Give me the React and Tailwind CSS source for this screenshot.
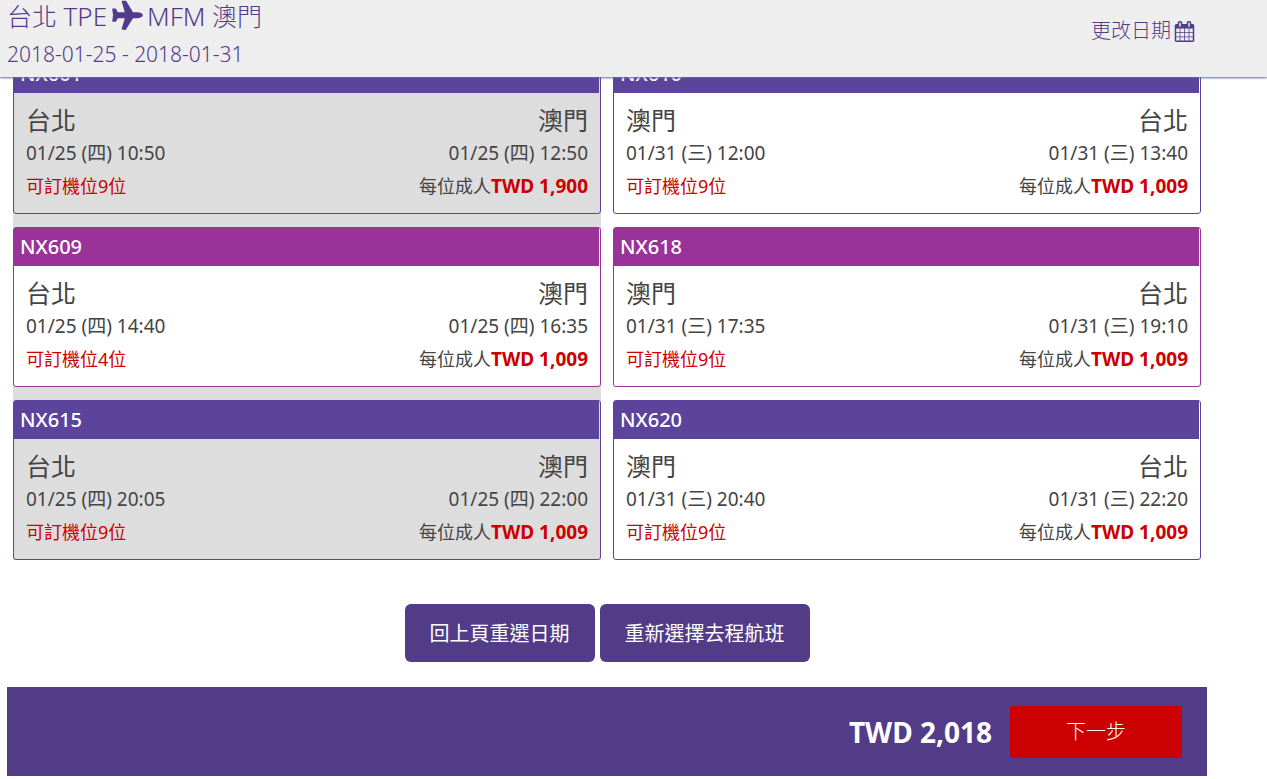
/**
 * FlightSelect Page - Pick outbound and return flights
 */
import { useState } from 'react'

const OUTBOUND = [
  { no: 'NX601', from: '台北', to: '澳門', depart: '01/25 (四) 10:50', arrive: '01/25 (四) 12:50', seats: 9, price: '1,900' },
  { no: 'NX609', from: '台北', to: '澳門', depart: '01/25 (四) 14:40', arrive: '01/25 (四) 16:35', seats: 4, price: '1,009' },
  { no: 'NX615', from: '台北', to: '澳門', depart: '01/25 (四) 20:05', arrive: '01/25 (四) 22:00', seats: 9, price: '1,009' },
]

const INBOUND = [
  { no: 'NX610', from: '澳門', to: '台北', depart: '01/31 (三) 12:00', arrive: '01/31 (三) 13:40', seats: 9, price: '1,009' },
  { no: 'NX618', from: '澳門', to: '台北', depart: '01/31 (三) 17:35', arrive: '01/31 (三) 19:10', seats: 9, price: '1,009' },
  { no: 'NX620', from: '澳門', to: '台北', depart: '01/31 (三) 20:40', arrive: '01/31 (三) 22:20', seats: 9, price: '1,009' },
]

function PlaneIcon({ className }) {
  return (
    <svg viewBox="0 0 1792 1792" fill="currentColor" aria-hidden="true" className={className}>
      <path d="M1568 160q44 52 12 148t-108 172l-161 161 160 696q5 19-12 33l-128 96q-7 6-19 6-4 0-7-1-15-3-21-16l-279-508-259 259 53 194q5 17-8 31l-96 96q-9 9-23 9h-2q-15-2-24-13l-189-252-252-189q-11-7-13-23-1-13 9-25l96-97q9-9 23-9 6 0 8 1l194 53 259-259-508-279q-14-8-17-24-2-16 9-27l128-128q14-13 30-8l665 159 160-160q76-76 172-108t148 12z" />
    </svg>
  )
}

function CalendarIcon({ className }) {
  return (
    <svg viewBox="0 0 1792 1792" fill="currentColor" aria-hidden="true" className={className}>
      <path d="M192 1664h288v-288h-288v288zm352 0h320v-288h-320v288zm-352-352h288v-320h-288v320zm352 0h320v-320h-320v320zm-352-384h288v-288h-288v288zm736 736h320v-288h-320v288zm-384-736h320v-288h-320v288zm768 736h288v-288h-288v288zm-384-352h320v-320h-320v320zm-352-864v-288q0-13-9.5-22.5t-22.5-9.5h-64q-13 0-22.5 9.5t-9.5 22.5v288q0 13 9.5 22.5t22.5 9.5h64q13 0 22.5-9.5t9.5-22.5zm736 864h288v-320h-288v320zm-384-384h320v-288h-320v288zm384 0h288v-288h-288v288zm32-480v-288q0-13-9.5-22.5t-22.5-9.5h-64q-13 0-22.5 9.5t-9.5 22.5v288q0 13 9.5 22.5t22.5 9.5h64q13 0 22.5-9.5t9.5-22.5zm384-64v1280q0 52-38 90t-90 38h-1408q-52 0-90-38t-38-90v-1280q0-52 38-90t90-38h128v-96q0-66 47-113t113-47h64q66 0 113 47t47 113v96h384v-96q0-66 47-113t113-47h64q66 0 113 47t47 113v96h128q52 0 90 38t38 90z" />
    </svg>
  )
}

function FlightCard({ flight, highlighted, dimmed, onSelect }) {
  return (
    <button
      type="button"
      onClick={onSelect}
      className={`block w-full rounded-[3px] border text-left text-[#444] ${highlighted ? 'border-[#993399]' : 'border-[#5c439c]'} ${dimmed ? 'bg-[#ddd]' : 'bg-white'}`}
    >
      <div className={`mr-px px-1.5 text-xl leading-[38px] font-medium text-white ${highlighted ? 'bg-[#993399]' : 'bg-[#5c439c]'}`}>
        {flight.no}
      </div>
      <div className="px-3 py-2.5">
        <div className="flex justify-between text-[25px] leading-[34px]">
          <span>{flight.from}</span>
          <span>{flight.to}</span>
        </div>
        <div className="flex justify-between text-[19px] leading-[33px]">
          <span>{flight.depart}</span>
          <span>{flight.arrive}</span>
        </div>
        <div className="flex justify-between text-lg leading-[33px]">
          <span className="text-[#c00]">可訂機位{flight.seats}位</span>
          <span className="flex">
            每位成人<strong className="text-[19px] font-bold text-[#c00]">TWD {flight.price}</strong>
          </span>
        </div>
      </div>
    </button>
  )
}

export default function App() {
  const [outbound, setOutbound] = useState('NX609')
  const [inbound, setInbound] = useState('NX618')

  return (
    <div className="bg-white font-['Noto_Sans','Noto_Sans_CJK_TC',sans-serif]">
      <header className="relative z-10 flex h-[77px] items-start justify-between bg-[#eee] pr-[72px] pl-[7px] font-light text-[#523b87] shadow-[0_1px_2px_#5c6a94]">
        <div>
          <h1 className="flex h-8 items-center text-[25px]">
            <span>
              台北 <span className="text-[26px]">TPE</span>
            </span>
            <PlaneIcon className="mr-1.5 size-[34px] rotate-45" />
            <span>
              <span className="text-[26px]">MFM</span> 澳門
            </span>
          </h1>
          <p className="text-[21px] leading-[44px]">2018-01-25 - 2018-01-31</p>
        </div>
        <a href="#dates" className="flex items-center gap-[3px] text-xl leading-[62px]">
          更改日期
          <CalendarIcon className="size-[21px]" />
        </a>
      </header>

      <main className="-mt-[23px] mr-[60px] ml-[7px]">
        <div className="grid grid-cols-2 gap-3 px-1.5">
          <section className="flex flex-col gap-[13px] bg-[#ddd]">
            {OUTBOUND.map((flight) => (
              <FlightCard
                key={flight.no}
                flight={flight}
                highlighted={flight.no === outbound}
                dimmed={flight.no !== outbound}
                onSelect={() => setOutbound(flight.no)}
              />
            ))}
          </section>
          <section className="flex flex-col gap-[13px]">
            {INBOUND.map((flight) => (
              <FlightCard
                key={flight.no}
                flight={flight}
                highlighted={flight.no === inbound}
                onSelect={() => setInbound(flight.no)}
              />
            ))}
          </section>
        </div>

        <div className="mt-11 flex justify-center gap-[5px] text-xl text-white text-shadow-[0_2px_1px_#0005]">
          <button type="button" className="rounded-md bg-[#523b87] px-[25px] pt-4 pb-3.5">
            回上頁重選日期
          </button>
          <button type="button" className="rounded-md bg-[#523b87] px-[25px] pt-4 pb-3.5">
            重新選擇去程航班
          </button>
        </div>

        <div className="mt-[25px] flex items-center justify-end gap-[18px] bg-[#523b87] pt-[19px] pr-[25px] pb-[18px] text-white">
          <span className="text-[28px] leading-9 font-bold">TWD 2,018</span>
          <button type="button" className="rounded-sm bg-[#c00] px-14 py-3 text-xl font-light">
            下一步
          </button>
        </div>
      </main>
    </div>
  )
}
